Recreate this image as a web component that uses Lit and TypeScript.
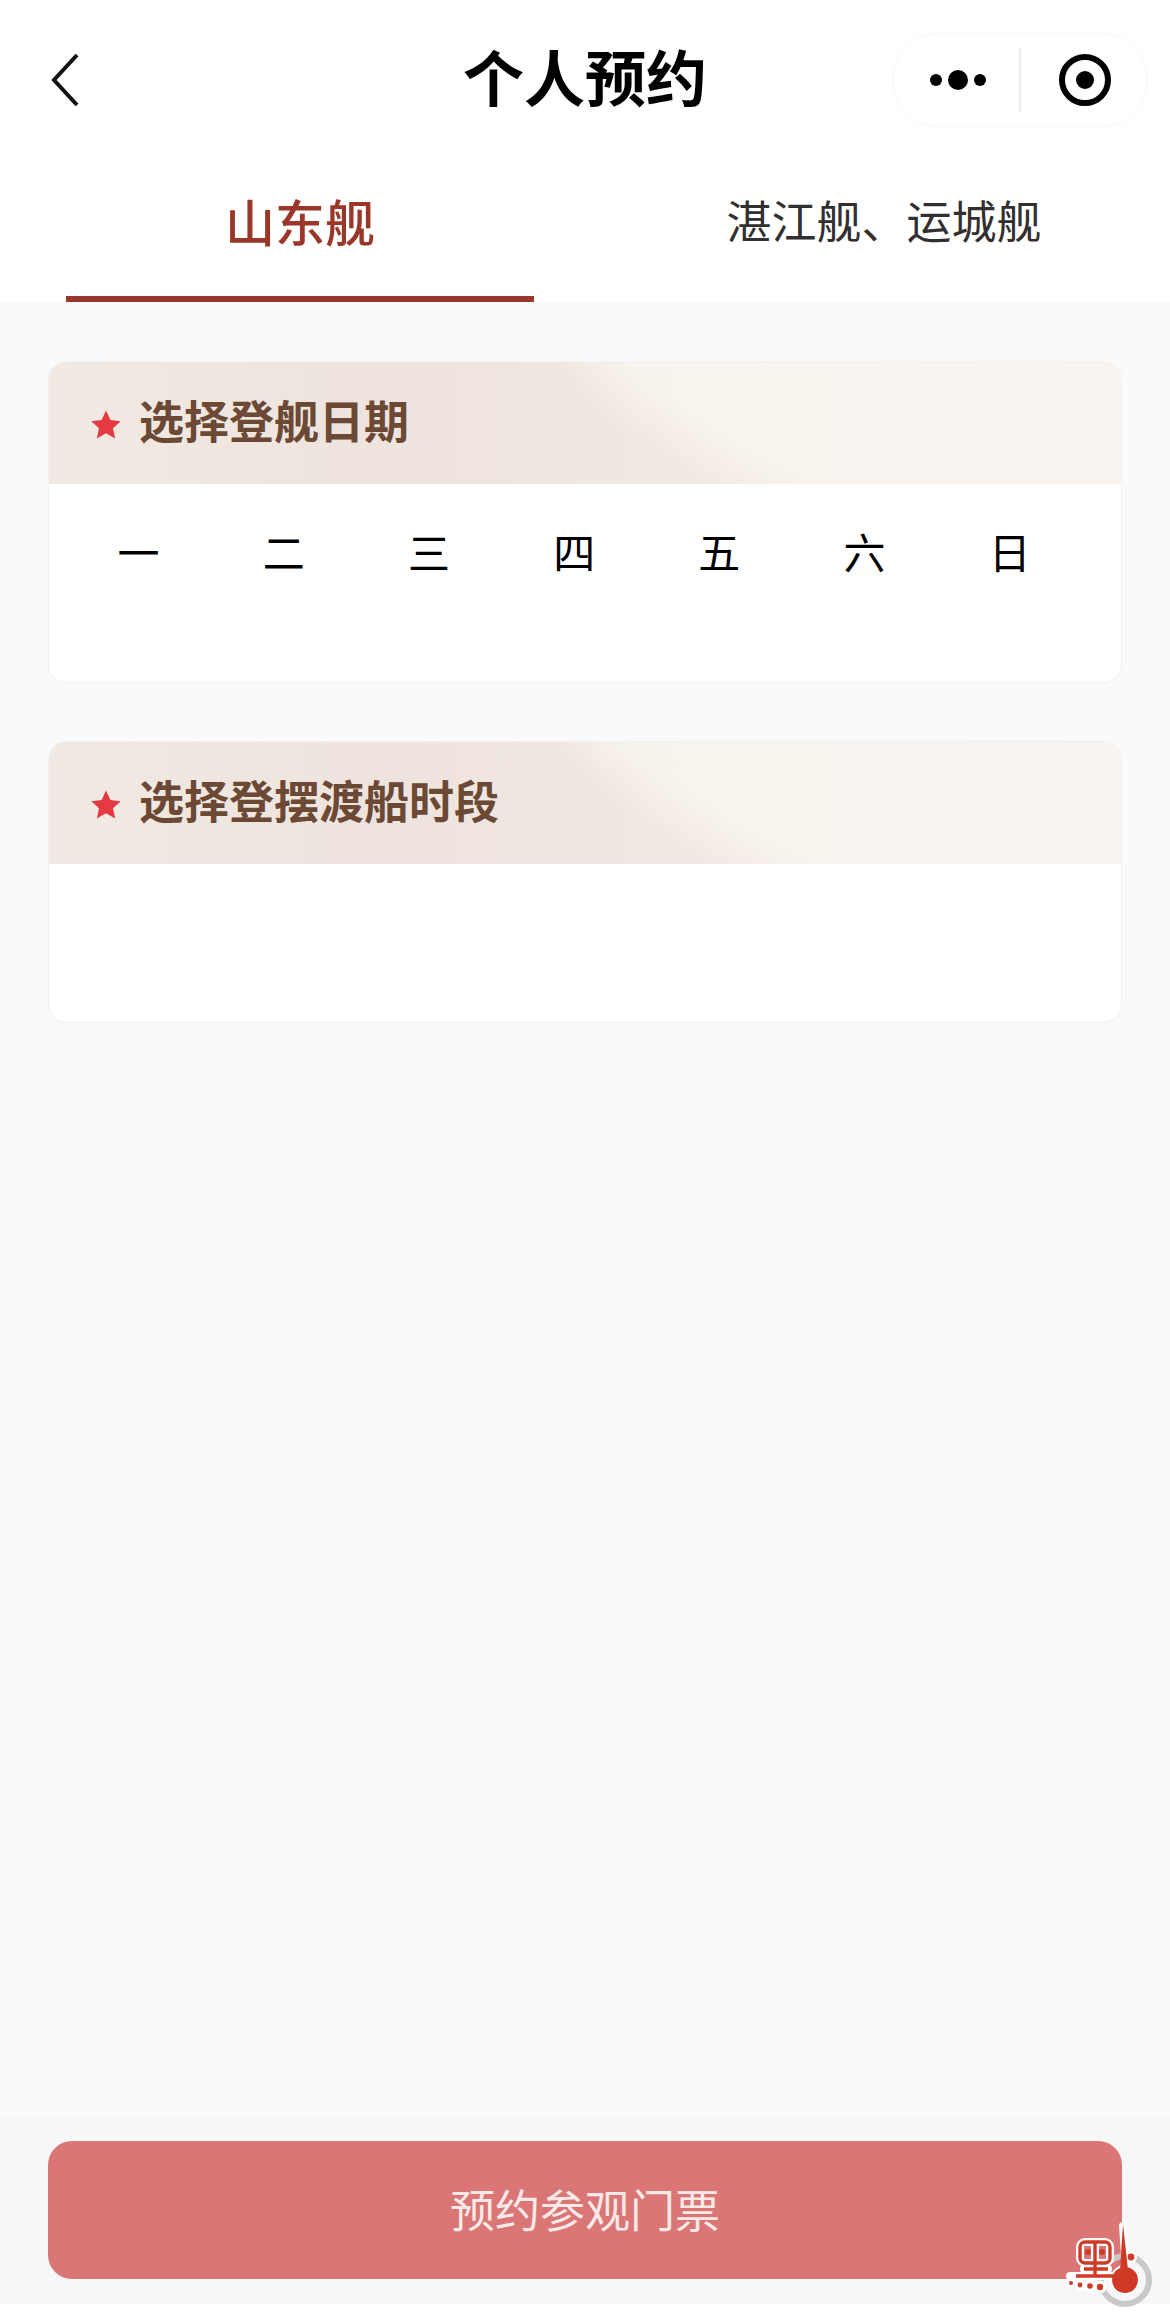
import { LitElement, html, css } from "lit";
import { customElement } from "lit/decorators.js";

@customElement("app-root")
export class AppRoot extends LitElement {
  static styles = css`
    :host { display: block; width: 1170px; height: 2323px; background: #fff; font-family: "Noto Sans CJK SC", "Noto Sans", sans-serif; }
    .page { position: relative; display: flex; flex-direction: column; height: 2323px; overflow: hidden; }
    .nav { position: relative; height: 150px; flex: none; display: flex; align-items: center; justify-content: center; box-sizing: border-box; }
    .title { font-size: 61px; font-weight: 700; line-height: 80px; color: #000; margin-bottom: -5px; transform: translateY(-2px); }
    .back { position: absolute; left: 48px; top: 51px; width: 36px; height: 58px; }
    .capsule { position: absolute; left: 892px; top: 33px; width: 256px; height: 94px; box-sizing: border-box; border: 1.5px solid #f7f7f7; border-radius: 47px; display: flex; align-items: center; }
    .capsule .half { width: 127px; height: 100%; display: flex; align-items: center; justify-content: center; }
    .capsule .dots { padding-left: 3px; box-sizing: border-box; }
    .capsule .sep { width: 1.5px; height: 64px; background: #ececec; flex: none; }
    .capsule .target { padding-left: 2px; box-sizing: border-box; }
    .tabs { flex: none; height: 152px; display: grid; grid-template-columns: 600px 570px; }
    .tab { display: flex; justify-content: center; height: 152px; box-sizing: border-box; padding-top: 40px; line-height: 60px; }
    .tab.on { position: relative; color: #9a3728; font-size: 50px; font-weight: 500; }
    .tab.on::after { content: ""; position: absolute; left: 66px; width: 468px; bottom: 0; height: 6px; background: #96382b; }
    .tab.off { color: #332f30; font-size: 45px; font-weight: 400; padding-right: 2px; }
    .main { flex: 1; background: #fafafa; padding: 59px 48px 0; display: flex; flex-direction: column; gap: 58px; }
    .card { background: #fff; border: 1px solid #f1f1f1; border-radius: 18px; overflow: hidden; box-sizing: border-box; }
    .card.date { height: 322px; }
    .card.time { height: 282px; }
    .head { height: 122px; display: flex; align-items: center; gap: 17px; padding-left: 41px; box-sizing: border-box;
      background:
        radial-gradient(circle at 1000px -456px, rgba(249,244,239,0.9) 622px, rgba(249,244,239,0) 675px),
        linear-gradient(90deg, #f1e9e3 0%, #eee4dd 30%, #f1e8e1 60%, #f7f2ed 100%); }
    .head svg { flex: none; margin-top: 4px; }
    .head span { font-size: 45px; line-height: 60px; font-weight: 700; color: #6b4935; transform: translateY(-3px); }
    .week { display: grid; grid-template-columns: repeat(7, 145.2px); padding: 39px 0 0 17px; font-size: 42px; line-height: 56px; color: #000; text-align: center; }
    .footer { flex: none; height: 187px; background: #f7f7f7; padding: 24px 48px 0; box-sizing: border-box; }
    .btn { height: 138px; border-radius: 24px; background: #da7676; color: #fbe9e7; font-size: 45px; line-height: 60px; display: flex; align-items: center; justify-content: center; padding-bottom: 3px; box-sizing: border-box; }
    .tail { flex: none; height: 19px; background: #fff; }
    .logo { position: absolute; left: 1060px; top: 2220px; width: 110px; height: 103px; }
  `;

  render() {
    const days = ["一", "二", "三", "四", "五", "六", "日"];
    const star = html`<svg width="32" height="32" viewBox="0 0 32 32"><path d="M16 1.5l4.4 9.6 10.3 1.1-7.7 7 2.2 10.3L16 24.2 6.8 29.5 9 19.2l-7.7-7 10.3-1.1z" fill="#e63a42"/></svg>`;
    return html`
      <div class="page">
        <div class="nav">
          <svg class="back" viewBox="0 0 36 58"><path d="M29 4 L6 29 L29 54" fill="none" stroke="#111" stroke-width="4"/></svg>
          <div class="title">个人预约</div>
          <div class="capsule">
            <div class="half dots">
              <svg width="62" height="30" viewBox="0 0 62 30"><circle cx="9" cy="15" r="6" fill="#000"/><circle cx="31" cy="15" r="10" fill="#000"/><circle cx="53" cy="15" r="6" fill="#000"/></svg>
            </div>
            <div class="sep"></div>
            <div class="half target">
              <svg width="54" height="54" viewBox="0 0 54 54"><circle cx="27" cy="27" r="23" fill="none" stroke="#000" stroke-width="6"/><circle cx="27" cy="27" r="9" fill="#000"/></svg>
            </div>
          </div>
        </div>
        <div class="tabs">
          <div class="tab on">山东舰</div>
          <div class="tab off">湛江舰、运城舰</div>
        </div>
        <div class="main">
          <div class="card date">
            <div class="head">${star}<span>选择登舰日期</span></div>
            <div class="week">${days.map((d) => html`<div>${d}</div>`)}</div>
          </div>
          <div class="card time">
            <div class="head">${star}<span>选择登摆渡船时段</span></div>
          </div>
        </div>
        <div class="footer"><div class="btn">预约参观门票</div></div>
        <div class="tail"></div>
        <svg class="logo" viewBox="0 0 110 103">
          <circle cx="65" cy="60" r="24" fill="none" stroke="#c9c9c9" stroke-width="6"/>
          <g fill="none" stroke="#fff" stroke-width="8" stroke-linecap="round">
            <rect x="20" y="22" width="30" height="21" rx="5"/>
            <path d="M35 22V56M24 49H48M10 56H60"/>
            <path d="M63 6L66 50"/>
          </g>
          <circle cx="65" cy="60" r="15" fill="#fff"/>
          <circle cx="71" cy="37" r="6" fill="#fff"/>
          <g fill="#fff"><circle cx="11" cy="63" r="5"/><circle cx="20" cy="65" r="5.5"/><circle cx="30" cy="66" r="6"/><circle cx="40" cy="67" r="6.5"/></g>
          <g fill="none" stroke="#cf3a27" stroke-width="3.4">
            <rect x="20" y="22" width="30" height="21" rx="5"/>
            <path d="M35 22V56M24 49H48M16 56H60"/>
          </g>
          <circle cx="28" cy="32" r="3" fill="#cf3a27"/><circle cx="42" cy="32" r="3" fill="#cf3a27"/>
          <path d="M63 4L60 50H68Z" fill="#cf3a27"/>
          <circle cx="65" cy="60" r="13" fill="#cf3a27"/>
          <circle cx="71" cy="37" r="3.4" fill="#cf3a27"/>
          <g fill="#cf3a27"><circle cx="11" cy="63" r="2"/><circle cx="20" cy="65" r="2.4"/><circle cx="30" cy="66" r="2.8"/><circle cx="40" cy="67" r="3.2"/></g>
        </svg>
      </div>
    `;
  }
}
